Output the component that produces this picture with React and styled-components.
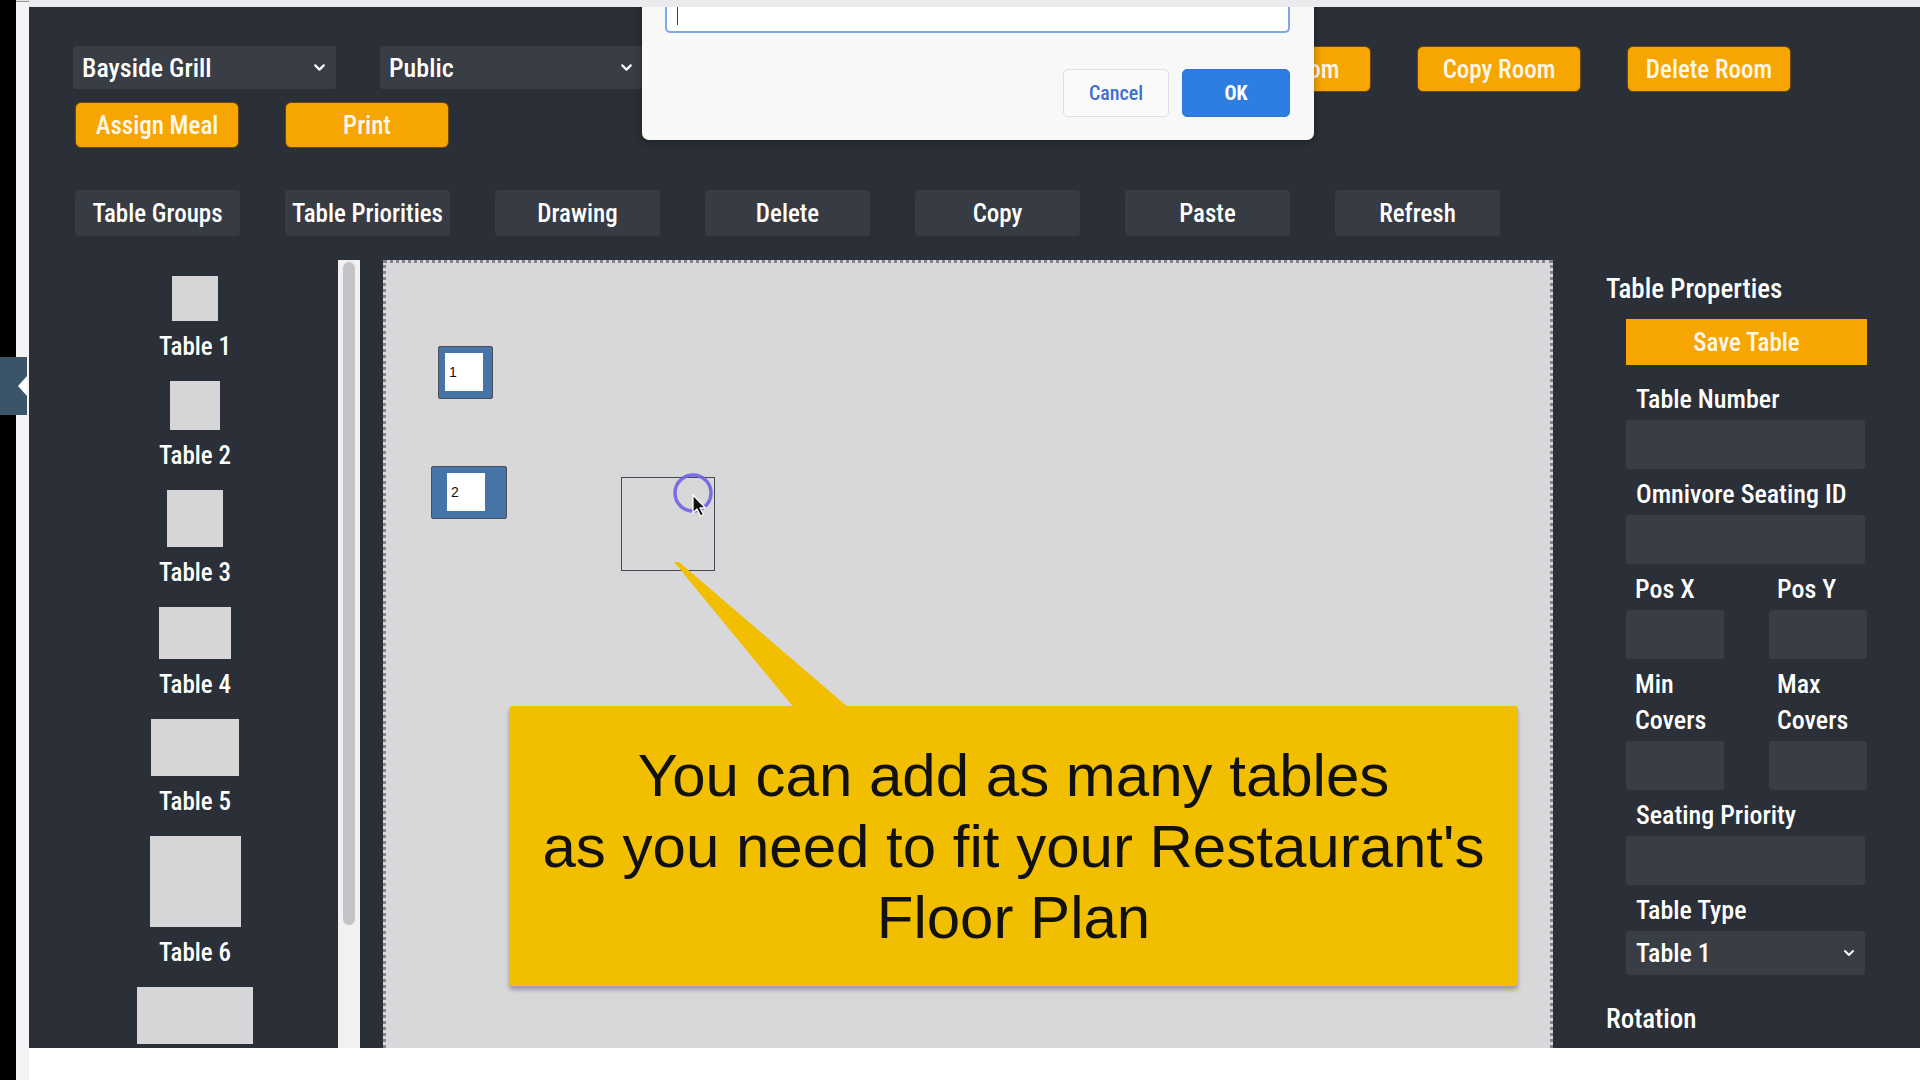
import React from 'react';
import styled, { createGlobalStyle } from 'styled-components';
import { ChevronDown } from 'lucide-react';

const GlobalStyle = createGlobalStyle`
  html, body {
    margin: 0;
    padding: 0;
    background: #fff;
    overflow: hidden;
  }
  body {
    font-family: "Roboto Condensed", Roboto, "Liberation Sans", sans-serif;
    font-stretch: condensed;
  }
`;

const Shell = styled.div`
  position: relative;
  width: 1920px;
  height: 1080px;
  display: grid;
  grid-template-columns: 16px 13px 1fr;
  background: #fff;
`;

const BlackEdge = styled.div`
  background: #000;
`;

const LightEdge = styled.div`
  background: #f3f3f5;
  border-top: 1px solid #e2e2e2;
  box-shadow: inset 0 60px 0 -59px #9a9a9a;
`;

const SideHandle = styled.div`
  position: absolute;
  left: 0;
  top: 357px;
  width: 27px;
  height: 58px;
  background: #3b5568;
  display: flex;
  align-items: center;
  justify-content: flex-end;

  &::after {
    content: '';
    border-top: 10px solid transparent;
    border-bottom: 10px solid transparent;
    border-right: 9px solid #fff;
  }
`;

const MainColumn = styled.div`
  display: flex;
  flex-direction: column;
  background: #fff;
`;

const TopStrip = styled.div`
  height: 7px;
  background: #ebebed;
`;

const Panel = styled.div`
  position: relative;
  height: 1041px;
  background: #2b2f38;
  color: #fff;
  display: flex;
  flex-direction: column;
  overflow: hidden;
`;

const Toolbar = styled.div`
  display: flex;
  flex-direction: column;
  gap: 10px;
  padding: 39px 129px 0 44px;
`;

const ToolRow = styled.div`
  display: flex;
  align-items: flex-start;
  gap: ${(p) => p.$gap || 46}px;
`;

const SelectBox = styled.div`
  width: ${(p) => p.$width || 263}px;
  height: ${(p) => p.$height || 43}px;
  box-sizing: border-box;
  background: #393d46;
  border-radius: 3px;
  display: flex;
  align-items: center;
  justify-content: space-between;
  padding: 0 8px 0 ${(p) => p.$padLeft || 9}px;
  font-size: 26px;
  font-weight: 500;
  color: #fff;
`;

const RoomActions = styled.div`
  display: flex;
  gap: 46px;
  margin-left: auto;
`;

const OrangeButton = styled.div`
  width: 164px;
  height: 46px;
  box-sizing: border-box;
  background: #f7a501;
  border: 1px solid #6e4700;
  border-radius: 6px;
  display: flex;
  align-items: center;
  justify-content: center;
  font-size: 25px;
  font-weight: 500;
  color: #fff8ea;
  margin-left: ${(p) => p.$offset || 0}px;
`;

const TabRow = styled.div`
  display: flex;
  gap: 45px;
  padding: 42px 0 0 46px;
`;

const Tab = styled.div`
  width: 165px;
  height: 46px;
  background: #373b44;
  border-radius: 4px;
  display: flex;
  align-items: center;
  justify-content: center;
  font-size: 25px;
  font-weight: 500;
  color: #fff;
`;

const Workspace = styled.div`
  flex: 1;
  display: flex;
  margin-top: 24px;
  min-height: 0;
`;

const Palette = styled.div`
  width: 309px;
  box-sizing: border-box;
  padding: 16px 23px 0 46px;
  display: flex;
  flex-direction: column;
  align-items: center;
  gap: 19px;
  overflow: hidden;
`;

const PaletteItem = styled.div`
  display: flex;
  flex-direction: column;
  align-items: center;
  gap: 11px;
`;

const TableShape = styled.div`
  width: ${(p) => p.$w}px;
  height: ${(p) => p.$h}px;
  background: #d6d6d9;
  flex-shrink: 0;
`;

const PaletteLabel = styled.div`
  font-size: 25px;
  line-height: 30px;
  font-weight: 500;
  color: #fff;
`;

const ScrollTrack = styled.div`
  width: 22px;
  background: #f1f1f2;
  display: flex;
  justify-content: center;
  padding-top: 2px;
  box-sizing: border-box;
`;

const ScrollThumb = styled.div`
  width: 12px;
  height: 663px;
  border-radius: 6px;
  background: #c4c4c6;
`;

const Canvas = styled.div`
  position: relative;
  margin-left: 23px;
  width: 1170px;
  box-sizing: border-box;
  background: #d8d8da;
  border: 3px dotted #86868a;
  border-bottom: none;
  overflow: hidden;
`;

const TableNode = styled.div`
  position: absolute;
  left: ${(p) => p.$x}px;
  top: ${(p) => p.$y}px;
  width: ${(p) => p.$w}px;
  height: ${(p) => p.$h}px;
  box-sizing: border-box;
  background: #4674a6;
  border: 1px solid #4a4f58;
  border-radius: 2px;
  padding: 6px 0 0 ${(p) => p.$pad || 6}px;
`;

const NodeFace = styled.div`
  width: 38px;
  height: 38px;
  background: #fff;
  font-family: "Liberation Sans", Arial, sans-serif;
  font-size: 14px;
  color: #111;
  display: flex;
  align-items: center;
  padding-left: 4px;
  box-sizing: border-box;
`;

const GhostTable = styled.div`
  position: absolute;
  left: 235px;
  top: 214px;
  width: 94px;
  height: 94px;
  box-sizing: border-box;
  border: 1px solid #45484f;
`;

const CursorLayer = styled.svg`
  position: absolute;
  left: 280px;
  top: 200px;
  overflow: visible;
`;

const Pointer = styled.svg`
  position: absolute;
  left: 0;
  top: 0;
  overflow: visible;
`;

const Callout = styled.div`
  position: absolute;
  left: 123px;
  top: 443px;
  width: 1009px;
  height: 280px;
  background: #f2bf00;
  border-radius: 4px;
  box-shadow: 0 4px 4px rgba(0, 0, 0, 0.28);
  display: flex;
  align-items: center;
  justify-content: center;
  text-align: center;
  font-family: "Liberation Sans", Arial, sans-serif;
  font-size: 60px;
  line-height: 71px;
  color: #111;
`;

const Properties = styled.div`
  flex: 1;
  padding: 13px 0 0 53px;
  display: flex;
  flex-direction: column;
`;

const SectionTitle = styled.div`
  font-size: 27px;
  line-height: 32px;
  font-weight: 500;
  margin-top: ${(p) => p.$top || 0}px;
`;

const Form = styled.div`
  width: 239px;
  margin-left: 20px;
  margin-top: 14px;
  display: flex;
  flex-direction: column;
`;

const SaveButton = styled.div`
  height: 46px;
  width: 241px;
  background: #f7a501;
  display: flex;
  align-items: center;
  justify-content: center;
  font-size: 25px;
  font-weight: 500;
  color: #fff8ea;
  margin-bottom: 16px;
`;

const Field = styled.div`
  display: flex;
  flex-direction: column;
  margin-bottom: 7px;
`;

const FieldLabel = styled.div`
  font-size: 26px;
  line-height: 36px;
  font-weight: 500;
  padding-left: ${(p) => p.$pad || 10}px;
  margin-bottom: 3px;
`;

const InputBox = styled.div`
  height: 49px;
  background: #393d46;
  border-radius: 3px;
`;

const PairRow = styled.div`
  display: grid;
  grid-template-columns: 98px 98px;
  column-gap: 45px;
`;

const PairCell = styled.div`
  display: flex;
  flex-direction: column;
  justify-content: flex-end;
  margin-bottom: 7px;
`;

const Dialog = styled.div`
  position: absolute;
  left: 613px;
  top: -27px;
  width: 672px;
  box-sizing: border-box;
  background: #f8f8f9;
  border-radius: 0 0 7px 7px;
  box-shadow: 0 2px 8px rgba(0, 0, 0, 0.35);
  padding: 0 24px 23px 23px;
  display: flex;
  flex-direction: column;
  gap: 36px;
  font-family: Roboto, "Liberation Sans", sans-serif;
  font-stretch: condensed;
`;

const PromptInput = styled.div`
  height: 53px;
  box-sizing: border-box;
  background: #fff;
  border: 2px solid #7ea6ea;
  border-top: none;
  border-radius: 0 0 5px 5px;
  padding: 27px 0 0 10px;
`;

const Caret = styled.div`
  width: 1px;
  height: 18px;
  background: #444;
`;

const DialogActions = styled.div`
  display: flex;
  justify-content: flex-end;
  gap: 13px;
`;

const DialogButton = styled.div`
  width: ${(p) => p.$w}px;
  height: 48px;
  box-sizing: border-box;
  border-radius: 5px;
  display: flex;
  align-items: center;
  justify-content: center;
  font-size: 20px;
  font-weight: ${(p) => (p.$primary ? 700 : 500)};
  background: ${(p) => (p.$primary ? '#2e7de0' : '#fafafa')};
  color: ${(p) => (p.$primary ? '#fff' : '#3f6fcf')};
  border: 1px solid ${(p) => (p.$primary ? '#2a74d3' : '#dedede')};
`;

const paletteTables = [
  { label: 'Table 1', w: 46, h: 45 },
  { label: 'Table 2', w: 50, h: 49 },
  { label: 'Table 3', w: 56, h: 57 },
  { label: 'Table 4', w: 72, h: 52 },
  { label: 'Table 5', w: 88, h: 57 },
  { label: 'Table 6', w: 91, h: 91 },
  { label: null, w: 116, h: 57 },
];

const tabs = ['Table Groups', 'Table Priorities', 'Drawing', 'Delete', 'Copy', 'Paste', 'Refresh'];

const App = () => (
  <>
    <GlobalStyle />
    <Shell>
      <BlackEdge />
      <LightEdge />
      <MainColumn>
        <TopStrip />
        <Panel>
          <Toolbar>
            <ToolRow $gap={44}>
              <SelectBox>
                Bayside Grill
                <ChevronDown size={17} strokeWidth={3} />
              </SelectBox>
              <SelectBox>
                Public
                <ChevronDown size={17} strokeWidth={3} />
              </SelectBox>
              <RoomActions>
                <OrangeButton>Add Room</OrangeButton>
                <OrangeButton>Edit Room</OrangeButton>
                <OrangeButton>Copy Room</OrangeButton>
                <OrangeButton>Delete Room</OrangeButton>
              </RoomActions>
            </ToolRow>
            <ToolRow>
              <OrangeButton $offset={2}>Assign Meal</OrangeButton>
              <OrangeButton>Print</OrangeButton>
            </ToolRow>
          </Toolbar>

          <TabRow>
            {tabs.map((t) => (
              <Tab key={t}>{t}</Tab>
            ))}
          </TabRow>

          <Workspace>
            <Palette>
              {paletteTables.map((t, i) => (
                <PaletteItem key={i}>
                  <TableShape $w={t.w} $h={t.h} />
                  {t.label && <PaletteLabel>{t.label}</PaletteLabel>}
                </PaletteItem>
              ))}
            </Palette>
            <ScrollTrack>
              <ScrollThumb />
            </ScrollTrack>

            <Canvas>
              <TableNode $x={52} $y={83} $w={55} $h={53} $pad={6}>
                <NodeFace>1</NodeFace>
              </TableNode>
              <TableNode $x={45} $y={203} $w={76} $h={53} $pad={15}>
                <NodeFace>2</NodeFace>
              </TableNode>
              <GhostTable />
              <Pointer width="1" height="1">
                <polygon points="288,299 293,299 463,445 408,445" fill="#f2bf00" />
              </Pointer>
              <CursorLayer width="1" height="1">
                <circle cx="27" cy="30" r="18" fill="none" stroke="#6f63e6" strokeWidth="3.5" opacity="0.9" />
                <path
                  d="M27 32 L27 50 L31 46 L34.5 53 L37.5 51.5 L34 45 L39.5 45 Z"
                  fill="#111"
                  stroke="#fff"
                  strokeWidth="1.3"
                  strokeLinejoin="round"
                />
              </CursorLayer>
              <Callout>
                You can add as many tables
                <br />
                as you need to fit your Restaurant's
                <br />
                Floor Plan
              </Callout>
            </Canvas>

            <Properties>
              <SectionTitle>Table Properties</SectionTitle>
              <Form>
                <SaveButton>Save Table</SaveButton>
                <Field>
                  <FieldLabel>Table Number</FieldLabel>
                  <InputBox />
                </Field>
                <Field>
                  <FieldLabel>Omnivore Seating ID</FieldLabel>
                  <InputBox />
                </Field>
                <PairRow>
                  <PairCell>
                    <FieldLabel $pad={9}>Pos X</FieldLabel>
                    <InputBox />
                  </PairCell>
                  <PairCell>
                    <FieldLabel $pad={8}>Pos Y</FieldLabel>
                    <InputBox />
                  </PairCell>
                  <PairCell>
                    <FieldLabel $pad={9}>Min Covers</FieldLabel>
                    <InputBox />
                  </PairCell>
                  <PairCell>
                    <FieldLabel $pad={8}>Max Covers</FieldLabel>
                    <InputBox />
                  </PairCell>
                </PairRow>
                <Field>
                  <FieldLabel>Seating Priority</FieldLabel>
                  <InputBox />
                </Field>
                <Field>
                  <FieldLabel>Table Type</FieldLabel>
                  <SelectBox $width={239} $height={44} $padLeft={10}>
                    Table 1
                    <ChevronDown size={16} strokeWidth={3} />
                  </SelectBox>
                </Field>
              </Form>
              <SectionTitle $top={21}>Rotation</SectionTitle>
            </Properties>
          </Workspace>

          <Dialog>
            <PromptInput>
              <Caret />
            </PromptInput>
            <DialogActions>
              <DialogButton $w={106}>Cancel</DialogButton>
              <DialogButton $w={108} $primary>OK</DialogButton>
            </DialogActions>
          </Dialog>
        </Panel>
      </MainColumn>
      <SideHandle />
    </Shell>
  </>
);

export default App;
